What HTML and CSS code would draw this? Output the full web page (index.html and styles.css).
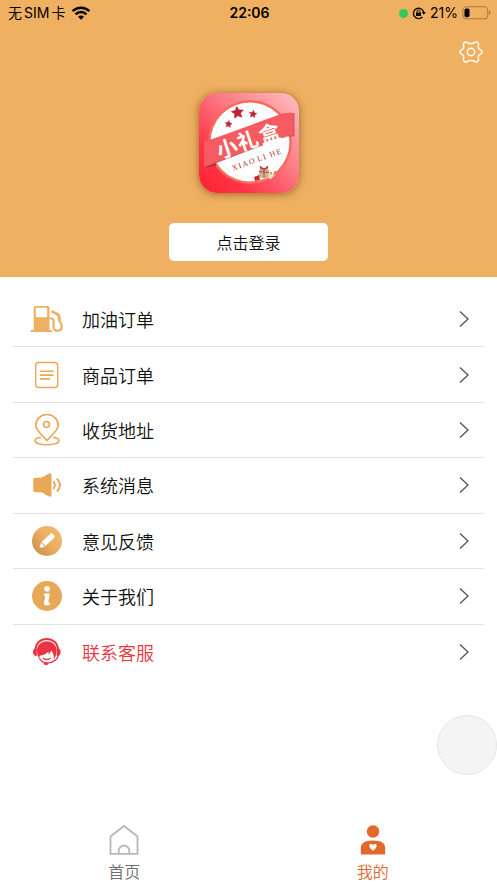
FILE: index.html
```html
<!DOCTYPE html>
<html lang="zh-CN">
<head>
<meta charset="utf-8">
<meta name="viewport" content="width=device-width, initial-scale=1">
<title>我的</title>
<link rel="stylesheet" href="styles.css">
</head>
<body>
<div class="app">
  <header class="hero">
    <div class="status">
      <div class="status-left">
        <span class="carrier"><span>无</span><span>SIM</span><span>卡</span></span>
        <svg width="20" height="14" viewBox="0 0 20 14" fill="none" stroke="#000" stroke-width="2.5" aria-hidden="true">
          <path d="M1.6 5.1a12 12 0 0 1 16.8 0"/>
          <path d="M4.6 8.3a7.6 7.6 0 0 1 10.8 0"/>
          <path d="M7 10.8a4.2 4.2 0 0 1 6 0L10 13.8z" fill="#000" stroke="none"/>
        </svg>
      </div>
      <time class="clock">22:06</time>
      <div class="status-right">
        <span class="dot"></span>
        <svg width="14" height="14" viewBox="0 0 14 14" fill="none" stroke="#000" aria-hidden="true">
          <path d="M10.4 11A5.2 5.2 0 1 1 11.7 6.2" stroke-width="1.3"/>
          <path d="M9.8 6h4l-2 2.8z" fill="#000" stroke="none"/>
          <rect x="4" y="6.4" width="5" height="3.7" rx=".6" fill="#000" stroke="none"/>
          <path d="M5 6.6V5.4a1.5 1.5 0 0 1 3 0v1.2"/>
        </svg>
        <span class="percent">21%</span>
        <svg width="29" height="14" viewBox="0 0 29 14" aria-hidden="true">
          <rect x=".8" y=".8" width="25" height="12" rx="3.6" fill="none" stroke="#a67c48" stroke-width="1.1"/>
          <rect x="2.5" y="2.4" width="5" height="8.8" rx="1.6"/>
          <path d="M27.2 4.8a2.3 2.3 0 0 1 0 4z" fill="#8f6b3f"/>
        </svg>
      </div>
    </div>
    <div class="toolbar">
      <button class="settings" type="button" aria-label="设置">
        <svg width="24" height="24" viewBox="0 0 24 24" fill="none" stroke="#fff" stroke-width="1.4" stroke-linejoin="round" aria-hidden="true">
          <path d="M5.4 2.5Q6.2 1.5 7.5 2.1L9.3 3Q12 4.3 14.7 3L16.5 2.1Q17.8 1.5 18.6 2.5L19.4 3.9Q19.8 4.8 19.4 6Q18.7 8.7 21.3 9.8L22.4 10.5Q23.8 12 22.4 13.5L21.3 14.2Q18.7 15.3 19.4 18Q19.8 19.2 19.4 20.1L18.6 21.5Q17.8 22.5 16.5 21.9L14.7 21Q12 19.7 9.3 21L7.5 21.9Q6.2 22.5 5.4 21.5L4.6 20.1Q4.2 19.2 4.6 18Q5.3 15.3 2.7 14.2L1.6 13.5Q.2 12 1.6 10.5L2.7 9.8Q5.3 8.7 4.6 6Q4.2 4.8 4.6 3.9Z"/>
          <circle cx="12" cy="12" r="3.7"/>
        </svg>
      </button>
    </div>
    <svg class="logo" width="100" height="100" viewBox="0 0 100 100" role="img" aria-label="小礼盒">
      <defs>
        <linearGradient id="logo-bg" x1="0" y1="1" x2="1" y2="0">
          <stop offset="0" stop-color="#ff1f30"/>
          <stop offset=".25" stop-color="#ff3547"/>
          <stop offset=".6" stop-color="#fb7d86"/>
          <stop offset="1" stop-color="#ffc0c2"/>
        </linearGradient>
        <path id="star" d="M0-6 1.8-2.2 6-1.8 2.9 1.1 3.7 5.2 0 3.2-3.7 5.2-2.9 1.1-6-1.8-1.8-2.2Z"/>
      </defs>
      <rect width="100" height="100" rx="18" fill="url(#logo-bg)"/>
      <circle cx="51" cy="49" r="42" fill="#fa6a5b"/>
      <circle cx="51" cy="49" r="39.5" fill="#fff"/>
      <circle cx="51" cy="49" r="35.5" fill="none" stroke="#f7f1f1"/>
      <g fill="#bd2335" stroke="#bd2335" stroke-width=".6" stroke-linejoin="round">
        <use href="#star" transform="translate(38.5 19.5) rotate(-8)"/>
        <use href="#star" transform="translate(29.5 31) rotate(8) scale(.6)"/>
        <use href="#star" transform="translate(54 21) rotate(8) scale(.64)"/>
      </g>
      <path d="M5 75 17 69.5V73Z" fill="#b93540"/>
      <path d="M5 48Q11 47 19 44L82 21Q89 19 95 20V43Q89 42 82 45L19 69Q11 72 5 74.5Z" fill="#f55b60"/>
      <path d="M5 74.5Q11 72 19 69L82 45Q89 42 95 43V20" fill="none" stroke="#a94149" stroke-width=".6"/>
      <g class="logo-name" transform="rotate(-18 50 47)">
        <text x="16" y="56">小</text>
        <text x="38" y="55">礼</text>
        <text x="61" y="55">盒</text>
      </g>
      <text class="logo-latin" transform="translate(34 78) rotate(-20)"><tspan x="0">X</tspan><tspan x="7">I</tspan><tspan x="11">A</tspan><tspan x="18">O</tspan><tspan x="27">L</tspan><tspan x="33">I</tspan><tspan x="40">H</tspan><tspan x="47">E</tspan></text>
      <rect x="60" y="76" width="10" height="9" rx="1" fill="#d3b28e" transform="rotate(7 65 80)"/>
      <path d="M65 76v9M60 78.5l10 1M65 76l-4-3 1 3zM65 76l4-3-1 3z" stroke="#a73435" stroke-width=".8" fill="#c75647"/>
      <path d="M55 84l5-2 1 5-5 1z" fill="#c92d2c"/>
      <path d="M70 80l6 2-4 4-3-1z" fill="#e8dccb"/>
      <circle cx="72" cy="80" r="1.2" fill="#d49b50"/>
      <circle cx="76" cy="79" r=".8" fill="#be3c35"/>
    </svg>
    <button class="login" type="button">点击登录</button>
  </header>

  <main>
    <nav class="menu" aria-label="个人中心">
      <a class="row" href="#fuel">
        <svg class="icon" viewBox="0 0 32 32" aria-hidden="true">
          <path fill="#efb062" fill-rule="evenodd" d="M4.5 3h12.2q1.8 0 1.8 1.8V27h1.7q1.2 0 1.2 2H-.5q0-2 1.2-2h2V4.8Q2.700 3 4.500 3zM5.800 4.800q-1 0-1 1v7.400q0 1 1 1h9.400q1 0 1-1V5.800q0-1-1-1z"/>
          <path fill="none" stroke="#efb062" stroke-width="2.2" stroke-linejoin="round" d="M18.500 15.500h2q2 0 2 2.500v5.500q0 4.300 4 4.300 4.300 0 4.300-4.800 0-2-2.300-5l-.8-4.500"/>
          <path fill="none" stroke="#efb062" stroke-width="2.8" d="m20.500 8.200 5.500 2.800q2.300 1.200 2.300 3.500v3"/>
        </svg>
        <span>加油订单</span>
        <svg class="arrow" viewBox="0 0 10 16" aria-hidden="true"><path d="m1 .5 8 7.500-8 7.500"/></svg>
      </a>
      <a class="row" href="#orders">
        <svg class="icon line" viewBox="0 0 32 32" aria-hidden="true">
          <rect x="4.7" y="3.5" width="22" height="25" rx="3" stroke-width="1.4"/>
          <path stroke-width="1.6" stroke-linecap="round" d="M9.500 12.300h12.500M9.500 16.100h12.500M9.500 19.900h9"/>
        </svg>
        <span>商品订单</span>
        <svg class="arrow" viewBox="0 0 10 16" aria-hidden="true"><path d="m1 .5 8 7.500-8 7.500"/></svg>
      </a>
      <a class="row" href="#address">
        <svg class="icon line" viewBox="0 0 32 32" aria-hidden="true">
          <path d="M16 26.500C10.500 20.500 4.800 16.500 4.800 11.300a11.200 10.800 0 0 1 22.400 0C27.200 16.500 21.500 20.500 16 26.500z"/>
          <circle cx="15.5" cy="10.5" r="3"/>
          <path d="M10 23.200C2.500 24.300 2.500 27.800 7 29.500c5 1.700 13 1.700 18 0 4.500-1.700 4.500-5.200-3-6.300"/>
        </svg>
        <span>收货地址</span>
        <svg class="arrow" viewBox="0 0 10 16" aria-hidden="true"><path d="m1 .5 8 7.500-8 7.500"/></svg>
      </a>
      <a class="row" href="#messages">
        <svg class="icon line" viewBox="0 0 32 32" aria-hidden="true">
          <path fill="#e8a857" stroke="none" d="M4.500 8.800h6L17 5q3.500-1.800 3.500 1v20q0 2.800-3.500 1L10.500 23.200h-6q-2.300 0-2.300-2v-10.400q0-2 2.300-2z"/>
          <path stroke-width="1.9" d="M22.300 12q3.200 4 0 8.200M25.800 9.500q6.500 6.500 0 13.200"/>
        </svg>
        <span>系统消息</span>
        <svg class="arrow" viewBox="0 0 10 16" aria-hidden="true"><path d="m1 .5 8 7.500-8 7.500"/></svg>
      </a>
      <a class="row" href="#feedback">
        <svg class="icon" viewBox="0 0 32 32" aria-hidden="true">
          <defs><linearGradient id="pen-bg" x1="0" y1="1" x2="1" y2="0"><stop offset="0" stop-color="#c58a45"/><stop offset=".55" stop-color="#edb064"/><stop offset="1" stop-color="#f2b86f"/></linearGradient></defs>
          <circle cx="16" cy="16" r="15" fill="url(#pen-bg)"/>
          <path fill="#fff" d="m18.500 9.700 1.400-1.200q.8-.7 1.600.1l2 2.300q.7.800-.1 1.500L14.500 21l-3.800-4.200zM10 17.500l3.800 4.200-5.200 1.200z"/>
        </svg>
        <span>意见反馈</span>
        <svg class="arrow" viewBox="0 0 10 16" aria-hidden="true"><path d="m1 .5 8 7.500-8 7.500"/></svg>
      </a>
      <a class="row" href="#about">
        <svg class="icon" viewBox="0 0 32 32" aria-hidden="true">
          <circle cx="16" cy="16" r="15" fill="#e7a858"/>
          <circle cx="16" cy="8.7" r="2.8" fill="#fff"/>
          <path fill="#fff" d="M12.300 14q3-.8 6-.8.7 2.800-.6 6.200-1 3.200 2 4.200-2.300 2.700-5.200 1.700-2.800-1.200-1-5.200 1.500-3.800-1.200-6.100z"/>
        </svg>
        <span>关于我们</span>
        <svg class="arrow" viewBox="0 0 10 16" aria-hidden="true"><path d="m1 .5 8 7.500-8 7.500"/></svg>
      </a>
      <a class="row support" href="#support">
        <svg class="icon" viewBox="0 0 32 32" aria-hidden="true">
          <path fill="none" stroke="#ea3441" stroke-width="1.8" d="M4.500 13C5 7 9.500 3 15.700 3S26.500 7 27 13"/>
          <path fill="#ea3441" d="M5.800 11.800v8.500q-3.800-.4-3.800-4.200t3.800-4.300zM25.800 11.800v8.500q3.800-.4 3.800-4.200t-3.800-4.300z"/>
          <path fill="#ea3441" d="M15.800 5.200c5.700 0 9.800 4 9.800 9.300 0 3.500-.8 6-2.800 8.800.3-3.700-.6-6.500-2.600-8.800-.6 1.900-1.700 3.300-3.200 4 .5-1 .6-2 .4-3-2 2.500-5.500 4-8.700 4.300-.5 1.100-.5 2.300-.3 3.500C6.800 20.800 6 18 6 14.500c0-5.300 4.100-9.300 9.800-9.300z"/>
          <path fill="none" stroke="#ea3441" stroke-width="1.3" d="M11.800 22q3.800 3 7.800 0M8.300 22.200q2 3.600 5.700 4.700M27.600 19q-2.300 7.400-11.500 8.200"/>
          <ellipse cx="15" cy="27.600" rx="2.200" ry="1.700" fill="#ea3441"/>
        </svg>
        <span>联系客服</span>
        <svg class="arrow" viewBox="0 0 10 16" aria-hidden="true"><path d="m1 .5 8 7.500-8 7.500"/></svg>
      </a>
    </nav>
  </main>

  <button class="floating" type="button" aria-label="快捷操作"></button>

  <nav class="tabs" aria-label="主导航">
    <a class="tab" href="#home">
      <svg width="32" height="32" viewBox="0 0 32 32" fill="none" stroke="#b8b8b8" stroke-width="1.8" aria-hidden="true">
        <path d="M2.500 12.500 16 2l13.500 10.500v17.300h-27z"/>
        <path d="M10.700 29.500v-2.700a5.300 5.300 0 0 1 10.600 0v2.700"/>
      </svg>
      <span>首页</span>
    </a>
    <a class="tab active" href="#mine" aria-current="page">
      <svg width="32" height="32" viewBox="0 0 32 32" fill="#e2682b" aria-hidden="true">
        <circle cx="16" cy="7.500" r="6.200"/>
        <path d="M3.800 29.800V24q0-7.500 12.200-7.500t12.200 7.500v5.800q0 .7-.7.7h-23q-.7 0-.7-.7z"/>
        <path fill="#fff" d="M16 26.800c-5.500-4-3.700-6.700-1.900-6.700q1.300 0 1.900 1.300.6-1.300 1.900-1.300c1.800 0 3.600 2.700-1.900 6.700z"/>
      </svg>
      <span>我的</span>
    </a>
  </nav>
</div>
</body>
</html>
```
FILE: styles.css
```css
* {
  box-sizing: border-box;
}

body {
  margin: 0;
  background: #fff;
  color: #111;
  font-family: "Noto Sans CJK SC", sans-serif;
  font-weight: 350;
}

button {
  padding: 0;
  border: 0;
  font: inherit;
  color: inherit;
}

a {
  color: inherit;
  text-decoration: none;
}

svg {
  display: block;
  flex: none;
}

.app {
  position: relative;
  display: flex;
  flex-direction: column;
  min-height: 100vh;
}

.hero {
  display: flex;
  flex-direction: column;
  align-items: center;
  padding-bottom: 16px;
  background: #f0b061;
}

.status {
  display: grid;
  grid-template-columns: 1fr auto 1fr;
  align-items: center;
  width: 100%;
  height: 26px;
  padding: 0 6px 0 8px;
  color: #000;
  font-family: Inter, "Noto Sans CJK SC", sans-serif;
  font-size: 14px;
  font-weight: 400;
  line-height: 20px;
}

.status-left,
.status-right {
  display: flex;
  align-items: center;
  gap: 6px;
}

.status-right {
  justify-content: flex-end;
  gap: 4px;
}

.carrier {
  display: flex;
  gap: 2px;
}

.clock {
  font-weight: 600;
}

.dot {
  width: 9px;
  height: 9px;
  border-radius: 50%;
  background: #34c759;
}

.toolbar {
  display: flex;
  justify-content: flex-end;
  width: 100%;
  padding: 14px 14px 0;
}

.settings {
  background: none;
}

.logo {
  margin-top: 29px;
  border-radius: 18px;
  box-shadow: 0 1px 9px rgba(90, 50, 10, 0.6);
}

.logo-name {
  fill: #fff;
  font-size: 21px;
  font-weight: 700;
}

.logo-latin {
  fill: #b52e3c;
  font-family: "Liberation Serif", serif;
  font-size: 8px;
  font-weight: 400;
}

.login {
  width: 32%;
  min-width: 128px;
  height: 38px;
  margin-top: 30px;
  border-radius: 5px;
  background: #fff;
  font-size: 16px;
  line-height: 24px;
}

.menu {
  display: grid;
  grid-auto-rows: 1fr;
  min-height: 388px;
  margin: 15px 13px 0;
}

.row {
  display: flex;
  align-items: center;
  padding: 0 15px 0 18px;
  border-bottom: 1px solid #e3e3e3;
  font-size: 18px;
  line-height: 28px;
}

.row:last-child {
  border-bottom: 0;
}

.icon {
  width: 32px;
  height: 32px;
  margin-right: 19px;
  overflow: visible;
}

.line {
  fill: none;
  stroke: #e8a857;
  stroke-width: 1.6px;
}

.arrow {
  width: 10px;
  height: 16px;
  margin-left: auto;
  fill: none;
  stroke: #555;
  stroke-width: 1.3px;
}

.support {
  color: #ea3441;
}

.floating {
  position: absolute;
  right: 0;
  bottom: 108px;
  width: 60px;
  height: 60px;
  border: 1px solid #e6e6e6;
  border-radius: 50%;
  background: #f4f4f4;
}

.tabs {
  display: grid;
  grid-template-columns: 1fr 1fr;
  margin-top: auto;
}

.tab {
  display: flex;
  flex-direction: column;
  align-items: center;
  gap: 3px;
  color: #6f6f6f;
  font-size: 16px;
  line-height: 24px;
}

.active {
  color: #e2682b;
}
```
